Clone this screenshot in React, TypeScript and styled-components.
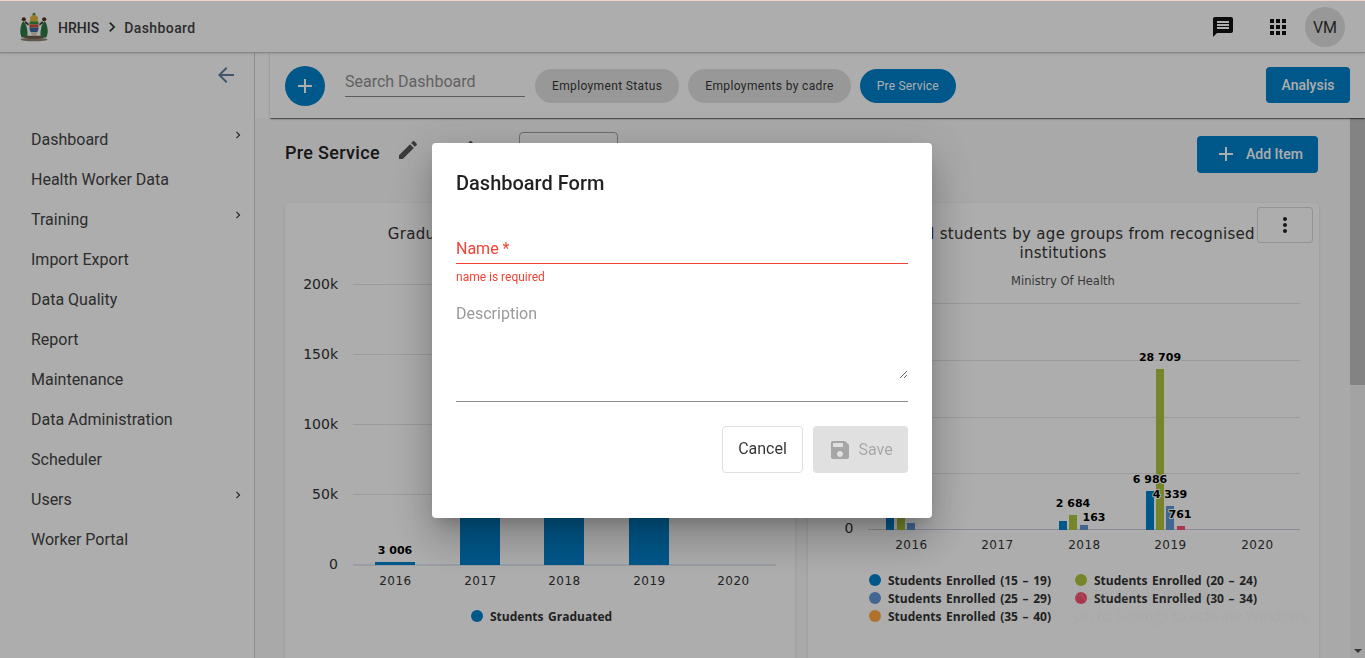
import React from "react";
import styled, { createGlobalStyle } from "styled-components";

const Global = createGlobalStyle`
  html, body { margin: 0; padding: 0; height: 100%; overflow: hidden; background: #fff; }
  * { box-sizing: border-box; }
  body { font-family: Roboto, "Liberation Sans", sans-serif; color: rgba(0,0,0,.87); }
`;

const PRIMARY = "#0080cb";
const OLIVE = "#aec53e";
const SLATE = "#6199d5";
const RED = "#fa516e";
const ORANGE = "#ffa942";

const Icon = ({ d, size = 24, color = "currentColor" }: { d: string; size?: number; color?: string }) => (
  <svg width={size} height={size} viewBox="0 0 24 24" fill={color} style={{ display: "block", flex: "none" }}>
    <path d={d} />
  </svg>
);

const ICONS = {
  message: "M20 2H4c-1.1 0-1.99.9-1.99 2L2 22l4-4h14c1.1 0 2-.9 2-2V4c0-1.1-.9-2-2-2zm-2 12H6v-2h12v2zm0-3H6V9h12v2zm0-3H6V6h12v2z",
  apps: "M4 8h4V4H4v4zm6 12h4v-4h-4v4zm-6 0h4v-4H4v4zm0-6h4v-4H4v4zm6 0h4v-4h-4v4zm6-10v4h4V4h-4zm-6 4h4V4h-4v4zm6 6h4v-4h-4v4zm0 6h4v-4h-4v4z",
  edit: "M3 17.25V21h3.75L17.81 9.94l-3.75-3.75L3 17.25zM20.71 7.04c.39-.39.39-1.02 0-1.41l-2.34-2.34c-.39-.39-1.02-.39-1.41 0l-1.83 1.83 3.75 3.75 1.83-1.83z",
  save: "M17 3H5c-1.11 0-2 .9-2 2v14c0 1.1.89 2 2 2h14c1.1 0 2-.9 2-2V7l-4-4zm-5 16c-1.66 0-3-1.34-3-3s1.34-3 3-3 3 1.34 3 3-1.34 3-3 3zm3-10H5V5h10v4z",
  more: "M12 8c1.1 0 2-.9 2-2s-.9-2-2-2-2 .9-2 2 .9 2 2 2zm0 2c-1.1 0-2 .9-2 2s.9 2 2 2 2-.9 2-2-.9-2-2-2zm0 6c-1.1 0-2 .9-2 2s.9 2 2 2 2-.9 2-2-.9-2-2-2z",
  add: "M19 13h-6v6h-2v-6H5v-2h6V5h2v6h6v2z",
  back: "M20 11H7.83l5.59-5.59L12 4l-8 8 8 8 1.41-1.41L7.83 13H20v-2z",
  chevron: "M10 6L8.59 7.41 13.17 12l-4.58 4.59L10 18l6-6z",
};

const Page = styled.div`
  height: 658px;
  width: 1365px;
  display: flex;
  flex-direction: column;
  overflow: hidden;
`;

const TopBar = styled.header`
  height: 53px;
  flex: none;
  display: flex;
  align-items: center;
  padding: 2px 20px 0 19px;
  border-bottom: 1px solid #c4c4c4;
  box-shadow: 0 1px 2px rgba(0,0,0,.12);
  position: relative;
  z-index: 2;
  background: #fff;
`;

const Brand = styled.span`
  margin: 1px 0 0 9px;
  font-size: 14px;
  font-weight: 500;
  color: #3a3a3a;
`;

const Crumb = styled.span`
  margin: 1px 0 0 2px;
  font-size: 14px;
  font-weight: 500;
  letter-spacing: 0.42px;
  color: #444;
`;

const CrumbArrow = styled.span`
  margin: 0 0 0 3px;
  color: #333;
`;

const TopActions = styled.div`
  margin-left: auto;
  display: flex;
  align-items: center;
`;

const TopIcon = styled.span<{ $gap: number }>`
  margin-right: ${(p) => p.$gap}px;
  color: #111;
`;

const Avatar = styled.div`
  width: 40px;
  height: 40px;
  border-radius: 50%;
  background: #e0e0e0;
  color: #333;
  font-size: 16px;
  display: flex;
  align-items: center;
  justify-content: center;
`;

const Body = styled.div`
  flex: 1;
  min-height: 0;
  display: flex;
`;

const Sidebar = styled.nav`
  width: 255px;
  flex: none;
  border-right: 1px solid #d0d0d0;
  background: #fff;
`;

const Collapse = styled.div`
  height: 66px;
  display: flex;
  justify-content: flex-end;
  align-items: flex-start;
  padding: 10px 16px 0 0;
  color: #5f7f9f;
`;

const MenuItem = styled.div`
  height: 40px;
  display: flex;
  align-items: center;
  padding-left: 31px;
  font-size: 16px;
  color: #444;
  position: relative;
`;

const MenuChevron = styled.span`
  position: absolute;
  left: 231px;
  top: 9px;
  color: #333;
`;

const Main = styled.main`
  flex: 1;
  min-width: 0;
  display: flex;
  flex-direction: column;
`;

const Toolbar = styled.div`
  height: 65px;
  flex: none;
  margin: 0 0 0 15px;
  display: flex;
  align-items: center;
  padding: 0 15px 0 15px;
  background: #fff;
  box-shadow: 0 2px 1px -1px rgba(0,0,0,.3), 0 1px 1px 0 rgba(0,0,0,.24), 0 1px 3px 0 rgba(0,0,0,.12);
  position: relative;
  z-index: 1;
`;

const Fab = styled.div`
  width: 40px;
  height: 40px;
  border-radius: 50%;
  background: ${PRIMARY};
  color: #fff;
  display: flex;
  align-items: center;
  justify-content: center;
  flex: none;
`;

const Search = styled.input`
  width: 180px;
  height: 29px;
  margin: -7px 10px 0 20px;
  border: 0;
  border-bottom: 1px solid #8a8a8a;
  outline: 0;
  padding: 0;
  background: transparent;
  font: 16px Roboto, sans-serif;
  &::placeholder { color: #8f8f8f; opacity: 1; }
`;

const Chip = styled.div<{ $active?: boolean }>`
  height: 34px;
  padding: 0 17px;
  margin-right: 9px;
  border-radius: 17px;
  display: flex;
  align-items: center;
  font-size: 12px;
  letter-spacing: ${(p) => (p.$active ? "0.2px" : "0.36px")};
  background: ${(p) => (p.$active ? PRIMARY : "#e0e0e0")};
  color: ${(p) => (p.$active ? "#fff" : "rgba(0,0,0,.8)")};
`;

const PrimaryButton = styled.div`
  background: ${PRIMARY};
  color: #fff;
  border-radius: 4px;
  font-size: 14px;
  font-weight: 500;
  display: flex;
  align-items: center;
`;

const AnalysisButton = styled(PrimaryButton)`
  margin: -2px 0 0 auto;
  height: 36px;
  width: 84px;
  justify-content: center;
`;

const ScrollRow = styled.div`
  flex: 1;
  min-height: 0;
  display: flex;
  background: #fafafa;
`;

const Content = styled.div`
  flex: 1;
  min-width: 0;
  padding: 0 31px 0 30px;
  overflow: hidden;
`;

const HeaderRow = styled.div`
  height: 85px;
  display: flex;
  align-items: flex-start;
  position: relative;
`;

const Heading = styled.h2`
  margin: 22px 0 0;
  font-size: 18px;
  font-weight: 500;
  letter-spacing: 0.32px;
  color: #222;
  line-height: 26px;
`;

const EditIcon = styled.span`
  margin: 20px 0 0 16px;
  color: #555;
`;

const ViewIcon = styled.span`
  margin: 20px 0 0 33px;
  color: #555;
`;

const GhostButton = styled.div`
  width: 99px;
  height: 40px;
  margin: 14px 0 0 42px;
  border: 1px solid rgba(0,0,0,.35);
  border-radius: 4px;
`;

const AddButton = styled(PrimaryButton)`
  margin: 18px 1px 0 auto;
  width: 121px;
  height: 37px;
  padding: 0 0 1px 17px;
  gap: 8px;
`;

const Cards = styled.div`
  display: flex;
  gap: 13px;
`;

const Card = styled.section<{ $w: number }>`
  width: ${(p) => p.$w}px;
  height: 470px;
  flex: none;
  background: #fff;
  border-radius: 4px;
  box-shadow: 0 1px 3px rgba(0,0,0,.14);
  position: relative;
`;

const KebabButton = styled.div`
  position: absolute;
  top: 4px;
  right: 6px;
  width: 56px;
  height: 36px;
  border: 1px solid rgba(0,0,0,.15);
  border-radius: 4px;
  background: #fff;
  color: #222;
  display: flex;
  align-items: center;
  justify-content: center;
`;

const ChartSvg = styled.svg`
  display: block;
  font-family: "DejaVu Sans", sans-serif;
`;

const LegendText = styled.text`
  font-family: "Open Sans", sans-serif;
  font-size: 12px;
  font-weight: 700;
  word-spacing: 1.5px;
  fill: #333;
`;

const ScrollTrack = styled.div`
  width: 15px;
  flex: none;
  background: #f1f1f1;
  position: relative;
`;

const ScrollThumb = styled.div`
  height: 267px;
  background: #c1c1c1;
`;

const ScrollArrow = styled.div`
  position: absolute;
  bottom: 5px;
  left: 4px;
  width: 0;
  height: 0;
  border-left: 4px solid transparent;
  border-right: 4px solid transparent;
  border-top: 4px solid #505050;
`;

const Backdrop = styled.div`
  position: fixed;
  inset: 0;
  z-index: 10;
  background: rgba(0,0,0,.32);
  border-top: 1px solid #f3d3c8;
  display: flex;
  align-items: center;
  justify-content: center;
  padding: 2px 1px 0 0;
`;

const Modal = styled.div`
  width: 500px;
  height: 375px;
  background: #fff;
  border-radius: 4px;
  padding: 24px;
  display: flex;
  flex-direction: column;
  box-shadow: 0 11px 15px -7px rgba(0,0,0,.2), 0 24px 38px 3px rgba(0,0,0,.14), 0 9px 46px 8px rgba(0,0,0,.12);
`;

const ModalTitle = styled.h1`
  margin: 0;
  font-size: 20px;
  line-height: 32px;
  font-weight: 500;
  color: rgba(0,0,0,.87);
`;

const NameInput = styled.input`
  display: block;
  width: 100%;
  height: 30px;
  margin-top: 35px;
  border: 0;
  border-bottom: 1px solid #f44336;
  outline: 0;
  padding: 0;
  font: 16px Roboto, sans-serif;
  &::placeholder { color: #f44336; opacity: 1; }
`;

const Hint = styled.div`
  margin-top: 6px;
  font-size: 12px;
  line-height: 14px;
  color: #f44336;
`;

const DescWrap = styled.div`
  margin-top: 20px;
  height: 98px;
  border-bottom: 1px solid #8e8e8e;
`;

const DescArea = styled.textarea`
  display: block;
  width: 100%;
  height: 75px;
  border: 0;
  outline: 0;
  padding: 0;
  font: 16px/20px Roboto, sans-serif;
  &::placeholder { color: #9a9a9a; opacity: 1; }
`;

const Actions = styled.div`
  margin-top: 24px;
  display: flex;
  justify-content: flex-end;
  gap: 10px;
`;

const CancelButton = styled.div`
  width: 81px;
  height: 47px;
  padding-bottom: 2px;
  border: 1px solid #e0e0e0;
  border-radius: 4px;
  display: flex;
  align-items: center;
  justify-content: center;
  font-size: 16px;
  color: rgba(0,0,0,.8);
`;

const SaveButton = styled.div`
  width: 95px;
  height: 47px;
  border-radius: 4px;
  background: #e0e0e0;
  color: rgba(0,0,0,.26);
  display: flex;
  align-items: center;
  justify-content: center;
  gap: 6px;
  font-size: 16px;
`;

const Watermark = styled.div`
  position: fixed;
  left: 1074px;
  top: 580px;
  z-index: 11;
  font-family: "Open Sans", sans-serif;
  color: rgba(150,150,150,.2);
  pointer-events: none;
`;

const WatermarkTitle = styled.div`
  font-size: 18px;
  line-height: 26px;
`;

const WatermarkSub = styled.div`
  font-size: 14.500px;
  line-height: 20px;
`;

const Logo = () => (
  <svg width="30" height="30" viewBox="0 0 30 30" style={{ flex: "none" }}>
    <ellipse cx="15" cy="27.500" rx="13.500" ry="1.800" fill="#8f8474" />
    <path d="M4 9.500c-1.800 2-2.500 6-2.700 9-.1 3 .6 5.500 1.500 7h5.400c.4-3 .5-6-.3-9-.4-3-1.700-6-3.900-7z" fill="#2c7a45" />
    <path d="M26 9.500c1.800 2 2.500 6 2.700 9 .1 3-.6 5.500-1.500 7h-5.400c-.4-3-.5-6 .3-9 .4-3 1.700-6 3.900-7z" fill="#2c7a45" />
    <circle cx="4.800" cy="7.300" r="2.100" fill="#4b3527" />
    <circle cx="25.200" cy="7.300" r="2.100" fill="#4b3527" />
    <path d="M6.500 9l3.500 3-.8 1.500-3.500-2.500zM23.500 9L20 12l.8 1.500 3.500-2.500z" fill="#4b3527" />
    <path d="M13.800 1.500c.5-1 1.900-1 2.400 0l.6 3h-3.600z" fill="#3f8f4c" />
    <circle cx="15" cy="7" r="4" fill="#e3b93a" />
    <path d="M10.500 9.500h9v3h-9z" fill="#3f8f4c" />
    <path d="M10.500 12.500h9v3h-9z" fill="#d14a32" />
    <path d="M10.500 15.500h9c0 2-.4 3.300-1.200 4.500h-6.600c-.8-1.200-1.200-2.500-1.200-4.500z" fill="#41689f" />
    <path d="M11.500 20h7l-1.500 3.500h-4z" fill="#d9d2c4" />
    <path d="M5 25.500c3 1.800 17 1.800 20 0l-1.500-1.800H6.500z" fill="#6d5c4b" />
  </svg>
);

const menu: [string, boolean][] = [
  ["Dashboard", true],
  ["Health Worker Data", false],
  ["Training", true],
  ["Import Export", false],
  ["Data Quality", false],
  ["Report", false],
  ["Maintenance", false],
  ["Data Administration", false],
  ["Scheduler", false],
  ["Users", true],
  ["Worker Portal", false],
];

const AXIS = "#c7cfe0";
const GRID = "#e6e6e6";

const Label = ({ x, y, children }: { x: number; y: number; children: string }) => (
  <text x={x} y={y} textAnchor="middle" fontSize="11" fontWeight="700" fill="#000" stroke="#fff" strokeWidth="2" paintOrder="stroke" strokeLinejoin="round">
    {children}
  </text>
);

const Legend = ({ x, y, color, children }: { x: number; y: number; color: string; children: string }) => (
  <g>
    <circle cx={x} cy={y} r="6" fill={color} />
    <LegendText x={x + 13} y={y + 5}>{children}</LegendText>
  </g>
);

const LeftChart = () => (
  <ChartSvg width="510" height="470" viewBox="285 203 510 470">
    <text x="540" y="239" textAnchor="middle" fontSize="15" fill="#333" letterSpacing="0.3">Graduates from recognised institutions</text>
    {[284, 354, 424, 494].map((y) => <line key={y} x1="353" x2="776" y1={y + 0.5} y2={y + 0.5} stroke={GRID} />)}
    <line x1="353" x2="776" y1="565" y2="565" stroke={AXIS} />
    {[["200k", 284], ["150k", 354], ["100k", 424], ["50k", 494], ["0", 564]].map(([t, y]) => (
      <text key={t as string} x="338" y={(y as number) + 5} textAnchor="end" fontSize="14" fill="#333">{t}</text>
    ))}
    {[[375, 562], [460, 420], [544, 440], [629, 430]].map(([x, y]) => (
      <rect key={x} x={x} y={y} width="40" height={565 - y} fill={PRIMARY} />
    ))}
    <Label x={395} y={554}>3 006</Label>
    {[["2016", 395], ["2017", 480], ["2018", 564], ["2019", 649], ["2020", 733]].map(([t, x]) => (
      <text key={t as string} x={(x as number) + 0.5} y="585" textAnchor="middle" fontSize="12" fill="#333" letterSpacing="0.5">{t}</text>
    ))}
    <Legend x={477} y={616} color={PRIMARY}>Students Graduated</Legend>
  </ChartSvg>
);

const rightBars: [number, number, string][] = [
  [886, 500, PRIMARY], [897, 505, OLIVE], [907, 523, SLATE],
  [1059, 521, PRIMARY], [1069, 515, OLIVE], [1080, 525, SLATE],
  [1146, 491, PRIMARY], [1156, 369, OLIVE], [1166, 506, SLATE], [1177, 526, RED],
];

const RightChart = () => (
  <ChartSvg width="511" height="470" viewBox="808 203 511 470">
    <text x="1063" y="239" textAnchor="middle" fontSize="15" fill="#333" letterSpacing="0.3">Enrolled students by age groups from recognised</text>
    <text x="1063" y="258" textAnchor="middle" fontSize="15" fill="#333" letterSpacing="0.3">institutions</text>
    <text x="1063" y="285" textAnchor="middle" fontSize="11.500" fill="#555">Ministry Of Health</text>
    {[303, 360, 417, 473].map((y) => <line key={y} x1="868" x2="1300" y1={y + 0.5} y2={y + 0.5} stroke={GRID} />)}
    <line x1="868" x2="1300" y1="529.500" y2="529.500" stroke={AXIS} />
    <text x="849" y="533" textAnchor="middle" fontSize="14" fill="#333">0</text>
    {rightBars.map(([x, y, c]) => <rect key={x} x={x} y={y} width="8" height={530 - y} fill={c} />)}
    <Label x={1160} y={361}>28 709</Label>
    <Label x={1150} y={483}>6 986</Label>
    <Label x={1170} y={498}>4 339</Label>
    <Label x={1180} y={518}>761</Label>
    <Label x={1073} y={507}>2 684</Label>
    <Label x={1094} y={521}>163</Label>
    {[["2016", 911], ["2017", 997], ["2018", 1084], ["2019", 1170], ["2020", 1257]].map(([t, x]) => (
      <text key={t as string} x={(x as number) + 0.5} y="549" textAnchor="middle" fontSize="12" fill="#333" letterSpacing="0.5">{t}</text>
    ))}
    <Legend x={875} y={580} color={PRIMARY}>Students Enrolled (15 – 19)</Legend>
    <Legend x={1081} y={580} color={OLIVE}>Students Enrolled (20 – 24)</Legend>
    <Legend x={875} y={598} color={SLATE}>Students Enrolled (25 – 29)</Legend>
    <Legend x={1081} y={598} color={RED}>Students Enrolled (30 – 34)</Legend>
    <Legend x={875} y={616} color={ORANGE}>Students Enrolled (35 – 40)</Legend>
  </ChartSvg>
);

export default function App() {
  return (
    <>
      <Global />
      <Page>
        <TopBar>
          <Logo />
          <Brand>HRHIS</Brand>
          <CrumbArrow><Icon d={ICONS.chevron} size={20} /></CrumbArrow>
          <Crumb>Dashboard</Crumb>
          <TopActions>
            <TopIcon $gap={31}><Icon d={ICONS.message} /></TopIcon>
            <TopIcon $gap={15}><Icon d={ICONS.apps} /></TopIcon>
            <Avatar>VM</Avatar>
          </TopActions>
        </TopBar>
        <Body>
          <Sidebar>
            <Collapse><Icon d={ICONS.back} /></Collapse>
            {menu.map(([label, hasChild]) => (
              <MenuItem key={label}>
                {label}
                {hasChild && <MenuChevron><Icon d={ICONS.chevron} size={14} /></MenuChevron>}
              </MenuItem>
            ))}
          </Sidebar>
          <Main>
            <Toolbar>
              <Fab><Icon d={ICONS.add} /></Fab>
              <Search placeholder="Search Dashboard" />
              <Chip>Employment Status</Chip>
              <Chip>Employments by cadre</Chip>
              <Chip $active>Pre Service</Chip>
              <AnalysisButton>Analysis</AnalysisButton>
            </Toolbar>
            <ScrollRow>
              <Content>
                <HeaderRow>
                  <Heading>Pre Service</Heading>
                  <EditIcon><Icon d={ICONS.edit} /></EditIcon>
                  <ViewIcon><Icon d={ICONS.edit} /></ViewIcon>
                  <GhostButton />
                  <AddButton><Icon d={ICONS.add} size={24} />Add Item</AddButton>
                </HeaderRow>
                <Cards>
                  <Card $w={510}><LeftChart /></Card>
                  <Card $w={511}>
                    <RightChart />
                    <KebabButton><Icon d={ICONS.more} /></KebabButton>
                  </Card>
                </Cards>
              </Content>
              <ScrollTrack>
                <ScrollThumb />
                <ScrollArrow />
              </ScrollTrack>
            </ScrollRow>
          </Main>
        </Body>
      </Page>
      <Backdrop>
        <Modal>
          <ModalTitle>Dashboard Form</ModalTitle>
          <NameInput placeholder="Name *" />
          <Hint>name is required</Hint>
          <DescWrap><DescArea placeholder="Description" /></DescWrap>
          <Actions>
            <CancelButton>Cancel</CancelButton>
            <SaveButton><Icon d={ICONS.save} />Save</SaveButton>
          </Actions>
        </Modal>
      </Backdrop>
      <Watermark>
        <WatermarkTitle>Activate Windows</WatermarkTitle>
        <WatermarkSub>Go to Settings to activate Windows.</WatermarkSub>
      </Watermark>
    </>
  );
}
